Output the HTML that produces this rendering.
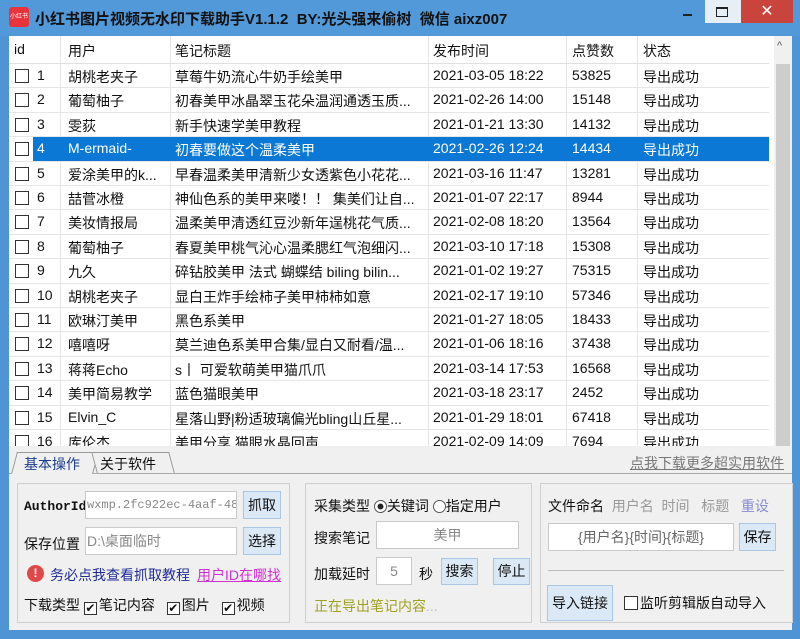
<!DOCTYPE html>
<html><head><meta charset="utf-8"><style>
*{margin:0;padding:0;box-sizing:border-box}
body{width:800px;height:639px;overflow:hidden;background:#4f95d6;font-family:"Liberation Sans","Noto Sans CJK SC",sans-serif;font-size:14px;color:#111;position:relative}
.a{position:absolute;white-space:nowrap}
#title{left:0;top:0;width:800px;height:36px;background:#5199d9}
#grid{left:9px;top:36px;width:783px;height:410px;background:#fff;overflow:hidden}
.row{position:absolute;left:0;width:760px;height:24.4px;border-bottom:1px solid #e6e6e6}
.row span{position:absolute;top:3px;overflow:hidden}
.cb{position:absolute;left:6px;top:5px;width:14px;height:14px;border:1px solid #333;background:#fff}
.sel{background:#0a78d4;color:#fff}
.vl{position:absolute;top:0;width:1px;height:410px;background:#e6e6e6}
#bottom{left:9px;top:446px;width:783px;height:184px;background:#f0f0f0}
.grp{position:absolute;border:1px solid #cfcfcf;background:#f0f0f0}
.btn{position:absolute;background:#dbe8f5;border:1px solid #a9c6e3;text-align:center}
.inp{position:absolute;background:#fff;border:1px solid #c9c9c9;color:#888}
.chk{display:inline-block;width:13px;height:13px;border:1px solid #333;background:#fff;vertical-align:-2px;margin-right:2px;font-size:12px;line-height:11px;text-align:center}
</style></head><body>
<div id="title" class="a">
 <div class="a" style="left:9px;top:7px;width:20px;height:20px;background:#e8333b;border-radius:3px;color:#fff;font-size:6px;line-height:20px;text-align:center">小红书</div>
 <div class="a" style="left:35px;top:8px;font-size:15px;font-weight:bold;color:#111">小红书图片视频无水印下载助手V1.1.2&nbsp; BY:光头强来偷树&nbsp; 微信 aixz007</div>
 <div class="a" style="left:683px;top:14px;width:9px;height:2px;background:#222"></div>
 <div class="a" style="left:705px;top:0;width:36px;height:23px;background:#e6eef6"></div>
 <div class="a" style="left:716px;top:7px;width:12px;height:10px;border:1px solid #222;border-top-width:2px"></div>
 <div class="a" style="left:741px;top:0;width:52px;height:23px;background:#c8443c;color:#fff;text-align:center;line-height:23px;font-size:16px">✕</div>
</div>
<div id="grid" class="a">
 <div class="vl" style="left:51px"></div><div class="vl" style="left:161px"></div><div class="vl" style="left:419px"></div><div class="vl" style="left:557px"></div><div class="vl" style="left:628px"></div>
 <div class="row" style="top:0;height:28px;border-bottom:1px solid #e0e0e0"><span style="left:5px;top:5px">id</span><span style="left:59px;top:5px">用户</span><span style="left:166px;top:5px">笔记标题</span><span style="left:424px;top:5px">发布时间</span><span style="left:563px;top:5px">点赞数</span><span style="left:634px;top:5px">状态</span></div>
 <div id="rows"></div>
 <div class="a" style="left:765px;top:0;width:18px;height:410px;background:#f0f0f0"></div>
 <div class="a" style="left:767px;top:28px;width:14px;height:382px;background:#cdcdcd"></div>
 <div class="a" style="left:768px;top:4px;font-size:11px;color:#555">^</div>
</div>
<div id="bottom" class="a">
 <div class="a" style="left:0;top:27px;width:783px;height:1px;background:#aaa"></div>
 <div class="a" style="left:5px;top:6px;width:82px;height:22px;border:1px solid #999;border-bottom:none;background:#f0f0f0;transform:skewX(-15deg)"></div>
 <div class="a" style="left:15px;top:8px;color:#1a3a8a">基本操作</div>
 <div class="a" style="left:85px;top:6px;width:78px;height:21px;border:1px solid #999;border-bottom:none;background:#f0f0f0;transform:skewX(15deg)"></div>
 <div class="a" style="left:91px;top:8px">关于软件</div>
 <div class="a" style="left:621px;top:7px;color:#777;text-decoration:underline">点我下载更多超实用软件</div>
 <div class="grp" style="left:8px;top:37px;width:273px;height:140px"></div>
 <div class="a" style="left:15px;top:53px;font-family:'Liberation Mono',monospace;font-size:13px;font-weight:bold">AuthorId</div>
 <div class="inp" style="left:76px;top:45px;width:152px;height:28px;font-family:'Liberation Mono',monospace;font-size:12px;line-height:26px;padding-left:1px;overflow:hidden">wxmp.2fc922ec-4aaf-48</div>
 <div class="btn" style="left:234px;top:45px;width:38px;height:28px;line-height:26px">抓取</div>
 <div class="a" style="left:15px;top:88px">保存位置</div>
 <div class="inp" style="left:76px;top:81px;width:152px;height:28px;line-height:26px;padding-left:1px">D:\桌面临时</div>
 <div class="btn" style="left:234px;top:81px;width:38px;height:28px;line-height:26px">选择</div>
 <div class="a" style="left:18px;top:119px;width:17px;height:17px;border-radius:50%;background:#e04848;color:#fff;font-size:12px;font-weight:bold;text-align:center;line-height:17px">!</div>
 <div class="a" style="left:41px;top:119px;color:#1f2b9a">务必点我查看抓取教程</div>
 <div class="a" style="left:188px;top:119px;color:#d030d0;text-decoration:underline">用户ID在哪找</div>
 <div class="a" style="left:15px;top:149px">下载类型 <span class="chk">✔</span>笔记内容 <span class="chk" style="margin-left:8px">✔</span>图片 <span class="chk" style="margin-left:8px">✔</span>视频</div>
 <div class="grp" style="left:296px;top:37px;width:227px;height:140px"></div>
 <div class="a" style="left:305px;top:50px">采集类型 <span style="display:inline-block;width:13px;height:13px;border:1px solid #555;border-radius:50%;vertical-align:-2px;background:radial-gradient(#222 35%,#fff 40%)"></span>关键词 <span style="display:inline-block;width:13px;height:13px;border:1px solid #555;border-radius:50%;vertical-align:-2px;background:#fff"></span>指定用户</div>
 <div class="a" style="left:305px;top:82px">搜索笔记</div>
 <div class="inp" style="left:367px;top:75px;width:143px;height:28px;line-height:26px;text-align:center">美甲</div>
 <div class="a" style="left:305px;top:118px">加载延时</div>
 <div class="inp" style="left:367px;top:111px;width:36px;height:28px;line-height:26px;text-align:center">5</div>
 <div class="a" style="left:410px;top:118px">秒</div>
 <div class="btn" style="left:432px;top:112px;width:37px;height:27px;line-height:25px">搜索</div>
 <div class="btn" style="left:484px;top:112px;width:37px;height:27px;line-height:25px">停止</div>
 <div class="a" style="left:305px;top:150px;color:#a0a020">正在导出笔记内容<span style="color:#bbb">...</span></div>
 <div class="grp" style="left:531px;top:37px;width:253px;height:140px"></div>
 <div class="a" style="left:539px;top:50px"><b style="font-weight:normal">文件命名</b> <span style="color:#999">&nbsp;用户名&nbsp; 时间&nbsp;&nbsp; 标题&nbsp;&nbsp;</span> <span style="color:#8a8ad0">重设</span></div>
 <div class="inp" style="left:539px;top:77px;width:186px;height:28px;line-height:26px;text-align:center;color:#666">{用户名}{时间}{标题}</div>
 <div class="btn" style="left:730px;top:77px;width:37px;height:28px;line-height:26px">保存</div>
 <div class="a" style="left:539px;top:124px;width:236px;height:1px;background:#bbb"></div>
 <div class="btn" style="left:538px;top:139px;width:66px;height:36px;line-height:34px">导入链接</div>
 <div class="a" style="left:615px;top:147px"><span class="chk" style="width:14px;height:14px"></span>监听剪辑版自动导入</div>
</div>
<script>
var d=[["1","胡桃老夹子","草莓牛奶流心牛奶手绘美甲","2021-03-05 18:22","53825"],["2","葡萄柚子","初春美甲冰晶翠玉花朵温润通透玉质...","2021-02-26 14:00","15148"],["3","雯荻","新手快速学美甲教程","2021-01-21 13:30","14132"],["4","M-ermaid-","初春要做这个温柔美甲","2021-02-26 12:24","14434"],["5","爱涂美甲的k...","早春温柔美甲清新少女透紫色小花花...","2021-03-16 11:47","13281"],["6","喆菅冰橙","神仙色系的美甲来喽！！ 集美们让自...","2021-01-07 22:17","8944"],["7","美妆情报局","温柔美甲清透红豆沙新年逞桃花气质...","2021-02-08 18:20","13564"],["8","葡萄柚子","春夏美甲桃气沁心温柔腮红气泡细闪...","2021-03-10 17:18","15308"],["9","九久","碎钻胶美甲 法式 蝴蝶结 biling bilin...","2021-01-02 19:27","75315"],["10","胡桃老夹子","显白王炸手绘柿子美甲柿柿如意","2021-02-17 19:10","57346"],["11","欧琳汀美甲","黑色系美甲","2021-01-27 18:05","18433"],["12","嘻嘻呀","莫兰迪色系美甲合集/显白又耐看/温...","2021-01-06 18:16","37438"],["13","蒋蒋Echo","s丨 可爱软萌美甲猫爪爪","2021-03-14 17:53","16568"],["14","美甲简易教学","蓝色猫眼美甲","2021-03-18 23:17","2452"],["15","Elvin_C","星落山野|粉适玻璃偏光bling山丘星...","2021-01-29 18:01","67418"],["16","库伦杰","美甲分享 猫眼水晶回声","2021-02-09 14:09","7694"]];
var h="";d.forEach(function(r,i){var s=i==3;h+='<div class="row'+(s?' sel':'')+'" style="top:'+(28+i*24.4)+'px">'+(s?'<div style="position:absolute;left:0;top:0;width:24px;height:100%;background:#fff"></div>':'')+'<div class="cb"></div><span style="left:28px">'+r[0]+'</span><span style="left:59px;width:100px">'+r[1]+'</span><span style="left:166px;width:250px">'+r[2]+'</span><span style="left:424px">'+r[3]+'</span><span style="left:563px">'+r[4]+'</span><span style="left:634px">导出成功</span></div>'});
document.getElementById("rows").innerHTML=h;
</script>
</body></html>
